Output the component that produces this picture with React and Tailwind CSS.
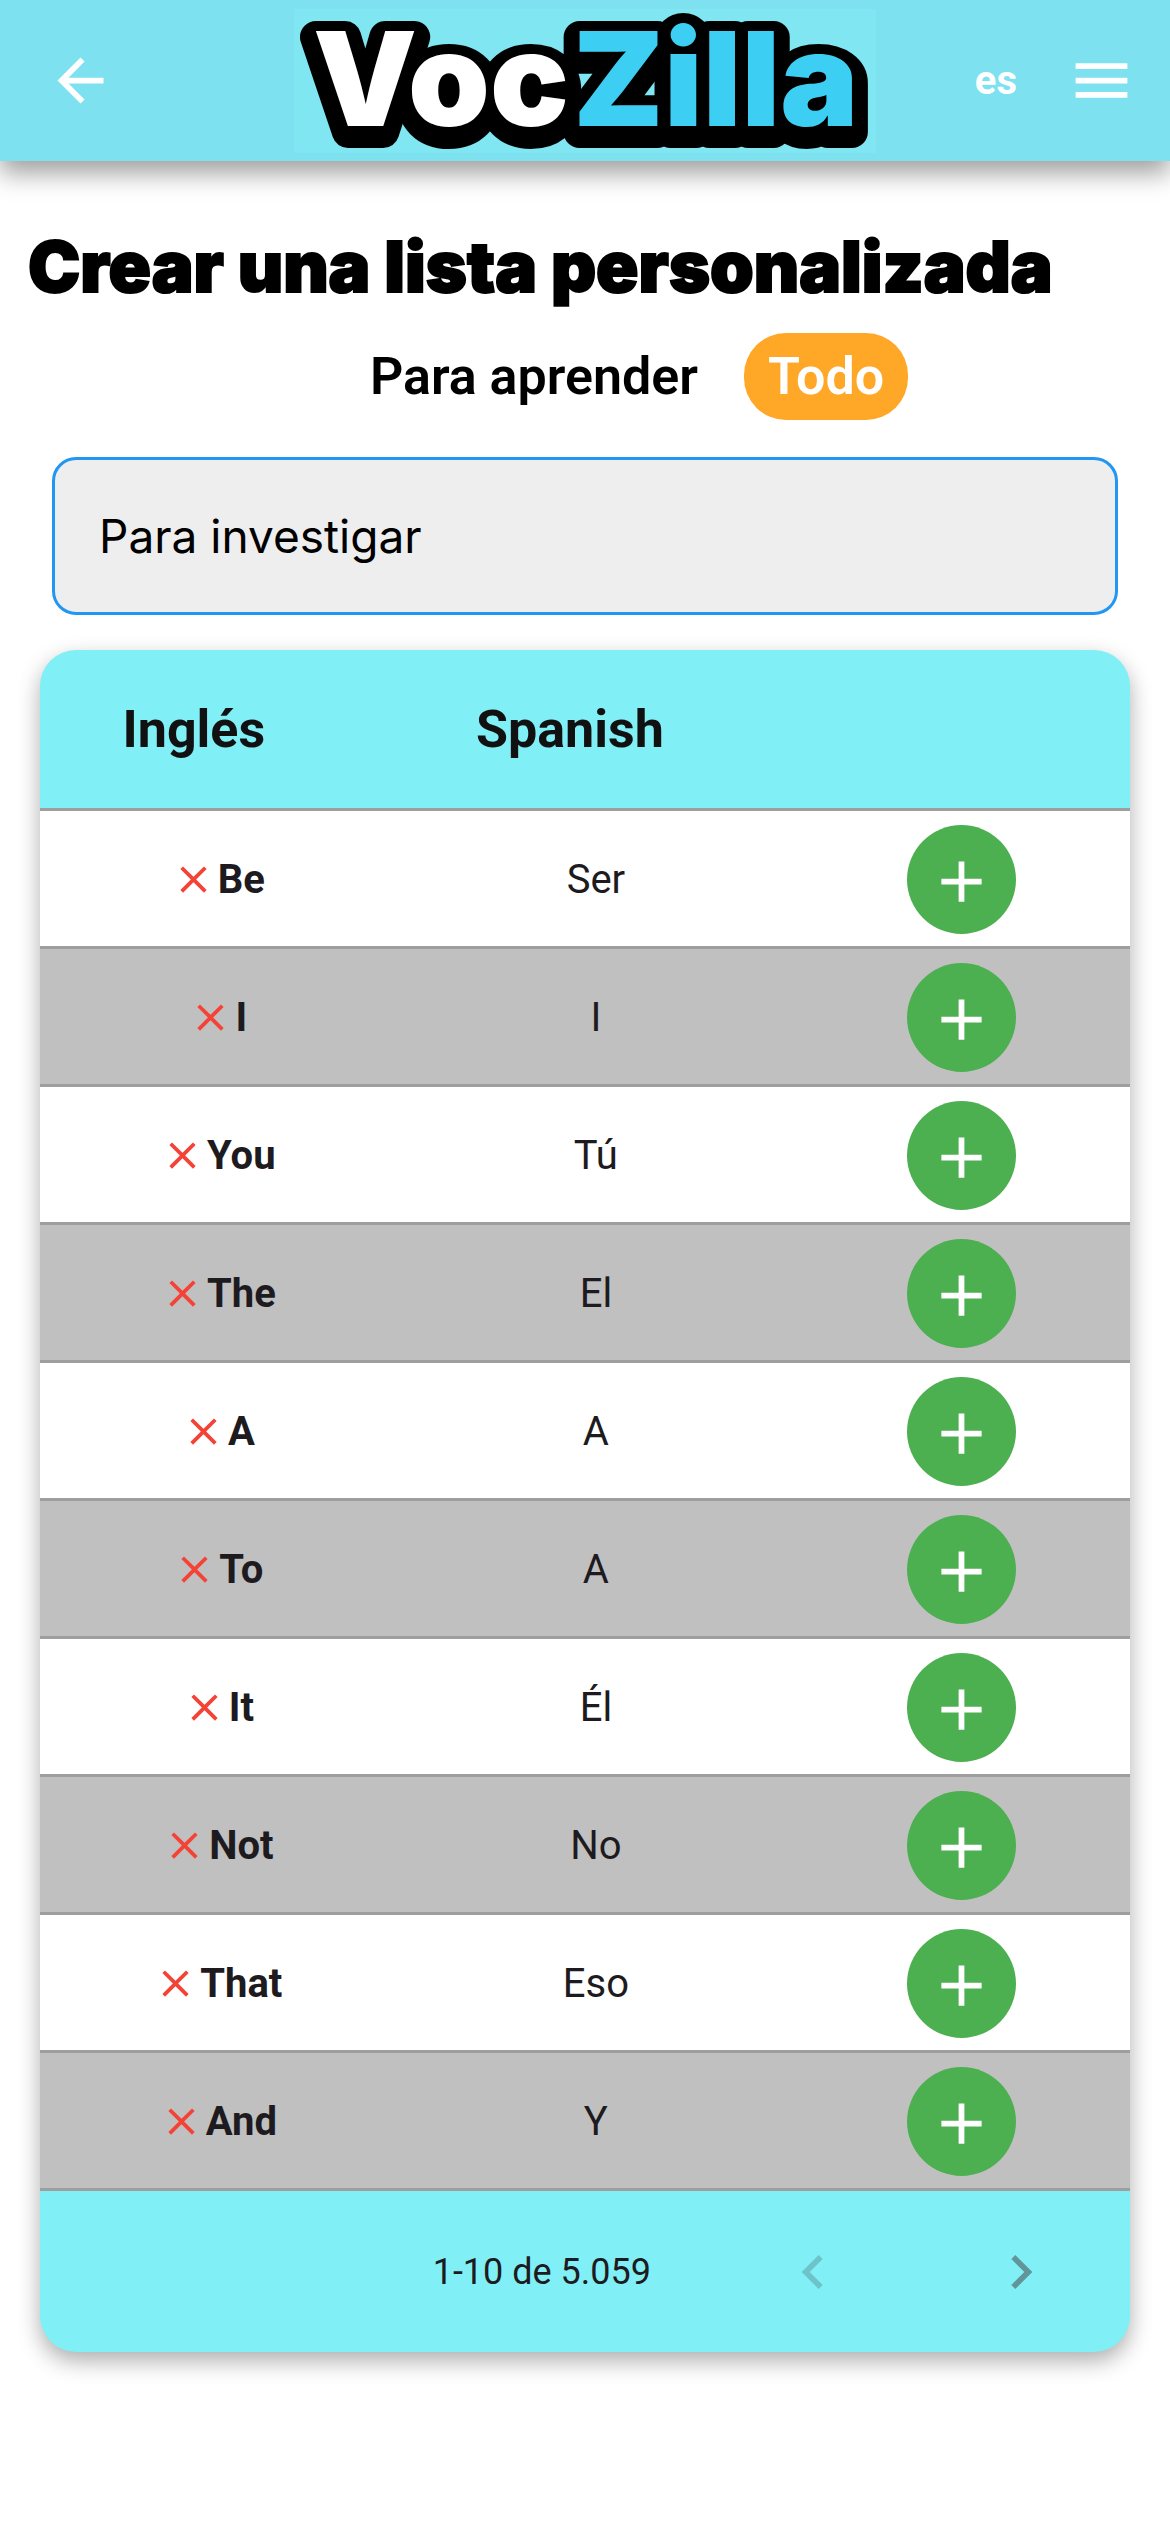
import {
  MdAdd,
  MdArrowBack,
  MdChevronLeft,
  MdChevronRight,
  MdClose,
  MdMenu,
} from "react-icons/md";

const WORDS = [
  ["Be", "Ser"],
  ["I", "I"],
  ["You", "Tú"],
  ["The", "El"],
  ["A", "A"],
  ["To", "A"],
  ["It", "Él"],
  ["Not", "No"],
  ["That", "Eso"],
  ["And", "Y"],
];

function Logo() {
  return (
    <svg
      viewBox="0 0 582 144"
      className="h-[144px] w-[582px] bg-[#80e6f1] font-['Inter',sans-serif] text-[131px] font-black"
      role="img"
      aria-label="VocZilla"
    >
      <defs>
        <text id="wordmark" x="19" y="117">
          <tspan fill="#ffffff">Voc</tspan>
          <tspan dx="4" fill="#3dcff3">Zilla</tspan>
        </text>
      </defs>
      <use href="#wordmark" y="6" stroke="#000000" strokeWidth="32" strokeLinejoin="round" />
      <use href="#wordmark" />
    </svg>
  );
}

function TopBar() {
  return (
    <header className="relative grid h-[161px] grid-cols-[1fr_auto_1fr] items-center bg-[#7de1f0] px-[34px] text-white shadow-[0_12px_24px_rgba(0,0,0,0.38)]">
      <button type="button" aria-label="Volver" className="justify-self-start px-3">
        <MdArrowBack size={69} />
      </button>
      <Logo />
      <div className="flex items-center gap-[50px] justify-self-end">
        <button type="button" className="text-[40px] leading-none font-bold">
          es
        </button>
        <button type="button" aria-label="Menú">
          <MdMenu size={69} />
        </button>
      </div>
    </header>
  );
}

function WordRow({ english, spanish }) {
  return (
    <tr className="h-[138px] odd:bg-white even:bg-[#c0c0c0]">
      <td className="border-b-3 border-[#9e9e9e] p-0 pt-[2px]">
        <div className="flex items-center justify-center gap-[2px] pr-1 font-bold">
          <MdClose size={45} className="text-[#f44336]" />
          {english}
        </div>
      </td>
      <td className="border-b-3 border-[#9e9e9e] p-0 pt-[2px] text-center">{spanish}</td>
      <td className="border-b-3 border-[#9e9e9e] p-0 pt-[2px]">
        <button
          type="button"
          aria-label={`Añadir ${english}`}
          className="mx-auto flex size-[109px] items-center justify-center rounded-full bg-[#4caf50] pt-1 text-white"
        >
          <MdAdd size={69} />
        </button>
      </td>
    </tr>
  );
}

export default function App() {
  return (
    <div className="min-h-screen bg-white font-['Roboto',sans-serif] text-black">
      <TopBar />
      <main className="px-10 pb-[180px]">
        <h1 className="-mx-3 pt-[66px] font-['Inter',sans-serif] text-[70px] leading-[80px] font-black [-webkit-text-stroke:2px_black]">
          Crear una lista personalizada
        </h1>
        <div className="mt-[26px] flex items-center justify-center gap-[46px] pl-[108px] text-[52px] leading-[87px] font-semibold">
          <span>Para aprender</span>
          <button type="button" className="rounded-[42px] bg-[#ffa726] px-6 text-white">
            Todo
          </button>
        </div>
        <div className="mt-[37px] px-3">
          <input
            type="text"
            aria-label="Para investigar"
            placeholder="Para investigar"
            className="h-[158px] w-full rounded-[24px] border-3 border-[#2196f3] bg-[#eeeeee] px-[44px] font-['Inter',sans-serif] text-[46px] placeholder:text-black placeholder:opacity-100"
          />
        </div>
        <section className="mt-[35px] overflow-hidden rounded-[36px] bg-[#80eff6] shadow-[0_9px_22px_rgba(0,0,0,0.32)]">
          <table className="w-full table-fixed border-separate border-spacing-0 text-[40px] text-[#1d1b20]">
            <colgroup>
              <col className="w-[33%]" />
              <col className="w-[36%]" />
              <col className="w-[31%]" />
            </colgroup>
            <thead>
              <tr className="h-[161px] text-[52px] text-[#111111]">
                <th scope="col" className="border-b-3 border-[#9e9e9e] p-0 pt-[2px] pr-[52px] font-bold">
                  Inglés
                </th>
                <th scope="col" className="border-b-3 border-[#9e9e9e] p-0 pt-[2px] pr-[52px] font-bold">
                  Spanish
                </th>
                <td className="border-b-3 border-[#9e9e9e] p-0" />
              </tr>
            </thead>
            <tbody>
              {WORDS.map(([english, spanish]) => (
                <WordRow key={english} english={english} spanish={spanish} />
              ))}
            </tbody>
          </table>
          <nav
            aria-label="Paginación"
            className="flex h-[161px] items-center justify-end pr-[75px] text-[36px] text-[#1d1b20]"
          >
            <span className="pr-[128px]">1-10 de 5.059</span>
            <button type="button" disabled aria-label="Página anterior" className="text-[#6cc3c9]">
              <MdChevronLeft size={68} />
            </button>
            <button type="button" aria-label="Página siguiente" className="ml-[140px] text-[#62959a]">
              <MdChevronRight size={68} />
            </button>
          </nav>
        </section>
      </main>
    </div>
  );
}
